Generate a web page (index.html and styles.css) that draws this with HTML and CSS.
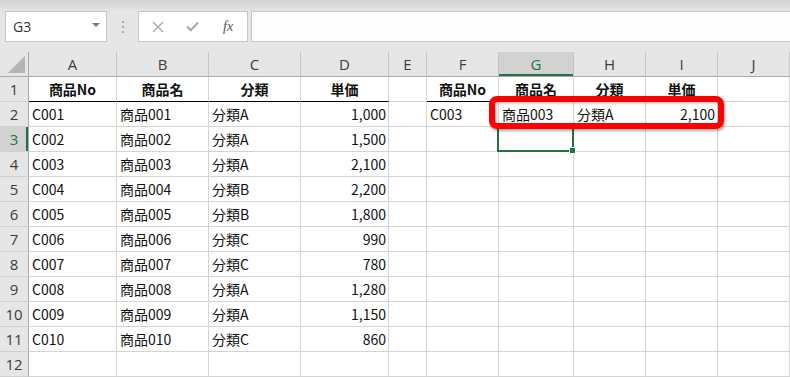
FILE: index.html
```html
<!DOCTYPE html>
<html lang="ja">

<head>
    <meta charset="UTF-8">
    <meta name="viewport" content="width=device-width, initial-scale=1.0">
    <title>Sheet</title>
    <link rel="stylesheet" href="styles.css">
</head>

<body>
    <div class="app">
        <div class="topbar"></div>

        <div class="formula-bar">
            <div class="name-box">
                <span>G3</span>
                <span class="caret"></span>
            </div>
            <div class="dots"><i></i><i></i><i></i></div>
            <div class="fx-box">
                <svg class="icon" width="12" height="12" viewBox="0 0 12 12">
                    <path d="M1 1 L11 11 M11 1 L1 11" stroke="#a9a9a9" stroke-width="1.4" fill="none" />
                </svg>
                <svg class="icon" width="13" height="11" viewBox="0 0 13 11">
                    <path d="M1 5.5 L4.8 9.3 L12 1.5" stroke="#a9a9a9" stroke-width="2" fill="none" />
                </svg>
                <span class="fx">fx</span>
            </div>
            <div class="formula-input"></div>
        </div>

        <div class="sheet">
            <div class="grid">
                <!-- column headers -->
                <div class="corner"><span class="tri"></span></div>
                <div class="ch">A</div>
                <div class="ch">B</div>
                <div class="ch">C</div>
                <div class="ch">D</div>
                <div class="ch">E</div>
                <div class="ch">F</div>
                <div class="ch sel">G</div>
                <div class="ch">H</div>
                <div class="ch">I</div>
                <div class="ch">J</div>

                <!-- row 1 -->
                <div class="rh">1</div>
                <div class="c hd line">商品No</div>
                <div class="c hd line">商品名</div>
                <div class="c hd line">分類</div>
                <div class="c hd line">単価</div>
                <div class="c"></div>
                <div class="c hd line">商品No</div>
                <div class="c hd line">商品名</div>
                <div class="c hd line">分類</div>
                <div class="c hd line">単価</div>
                <div class="c"></div>

                <!-- row 2 -->
                <div class="rh">2</div>
                <div class="c">C001</div>
                <div class="c">商品001</div>
                <div class="c">分類A</div>
                <div class="c num">1,000</div>
                <div class="c"></div>
                <div class="c">C003</div>
                <div class="c">商品003</div>
                <div class="c">分類A</div>
                <div class="c num">2,100</div>
                <div class="c"></div>

                <!-- row 3 -->
                <div class="rh sel">3</div>
                <div class="c">C002</div>
                <div class="c">商品002</div>
                <div class="c">分類A</div>
                <div class="c num">1,500</div>
                <div class="c"></div>
                <div class="c"></div>
                <div class="c"></div>
                <div class="c"></div>
                <div class="c"></div>
                <div class="c"></div>

                <!-- row 4 -->
                <div class="rh">4</div>
                <div class="c">C003</div>
                <div class="c">商品003</div>
                <div class="c">分類A</div>
                <div class="c num">2,100</div>
                <div class="c"></div>
                <div class="c"></div>
                <div class="c"></div>
                <div class="c"></div>
                <div class="c"></div>
                <div class="c"></div>

                <!-- row 5 -->
                <div class="rh">5</div>
                <div class="c">C004</div>
                <div class="c">商品004</div>
                <div class="c">分類B</div>
                <div class="c num">2,200</div>
                <div class="c"></div>
                <div class="c"></div>
                <div class="c"></div>
                <div class="c"></div>
                <div class="c"></div>
                <div class="c"></div>

                <!-- row 6 -->
                <div class="rh">6</div>
                <div class="c">C005</div>
                <div class="c">商品005</div>
                <div class="c">分類B</div>
                <div class="c num">1,800</div>
                <div class="c"></div>
                <div class="c"></div>
                <div class="c"></div>
                <div class="c"></div>
                <div class="c"></div>
                <div class="c"></div>

                <!-- row 7 -->
                <div class="rh">7</div>
                <div class="c">C006</div>
                <div class="c">商品006</div>
                <div class="c">分類C</div>
                <div class="c num">990</div>
                <div class="c"></div>
                <div class="c"></div>
                <div class="c"></div>
                <div class="c"></div>
                <div class="c"></div>
                <div class="c"></div>

                <!-- row 8 -->
                <div class="rh">8</div>
                <div class="c">C007</div>
                <div class="c">商品007</div>
                <div class="c">分類C</div>
                <div class="c num">780</div>
                <div class="c"></div>
                <div class="c"></div>
                <div class="c"></div>
                <div class="c"></div>
                <div class="c"></div>
                <div class="c"></div>

                <!-- row 9 -->
                <div class="rh">9</div>
                <div class="c">C008</div>
                <div class="c">商品008</div>
                <div class="c">分類A</div>
                <div class="c num">1,280</div>
                <div class="c"></div>
                <div class="c"></div>
                <div class="c"></div>
                <div class="c"></div>
                <div class="c"></div>
                <div class="c"></div>

                <!-- row 10 -->
                <div class="rh">10</div>
                <div class="c">C009</div>
                <div class="c">商品009</div>
                <div class="c">分類A</div>
                <div class="c num">1,150</div>
                <div class="c"></div>
                <div class="c"></div>
                <div class="c"></div>
                <div class="c"></div>
                <div class="c"></div>
                <div class="c"></div>

                <!-- row 11 -->
                <div class="rh">11</div>
                <div class="c">C010</div>
                <div class="c">商品010</div>
                <div class="c">分類C</div>
                <div class="c num">860</div>
                <div class="c"></div>
                <div class="c"></div>
                <div class="c"></div>
                <div class="c"></div>
                <div class="c"></div>
                <div class="c"></div>

                <!-- row 12 -->
                <div class="rh">12</div>
                <div class="c"></div>
                <div class="c"></div>
                <div class="c"></div>
                <div class="c"></div>
                <div class="c"></div>
                <div class="c"></div>
                <div class="c"></div>
                <div class="c"></div>
                <div class="c"></div>
                <div class="c"></div>
            </div>

            <div class="selection"><span class="handle"></span></div>
            <div class="callout"></div>
        </div>
    </div>
</body>

</html>
```

FILE: styles.css
```css
body {
    margin: 0;
    background-color: #e6e6e6;
    font-family: "Noto Sans CJK JP", "Noto Sans", sans-serif;
}

.app {
    width: 790px;
}

.topbar {
    height: 11px;
    background: linear-gradient(#d2d2d2, #e4e4e4);
}

/* formula bar */

.formula-bar {
    display: flex;
    height: 31px;
    padding-left: 5px;
}

.name-box {
    width: 102px;
    box-sizing: border-box;
    border: 1px solid #c6c6c6;
    background-color: #fff;
    display: flex;
    align-items: center;
    justify-content: space-between;
    padding: 0 6px 0 7px;
    font-family: "Open Sans", "Noto Sans", sans-serif;
    font-size: 14px;
    color: #333;
}

.caret {
    width: 0;
    height: 0;
    border-left: 4px solid transparent;
    border-right: 4px solid transparent;
    border-top: 4px solid #777;
    margin-bottom: 3px;
}

.dots {
    width: 31px;
    display: flex;
    flex-direction: column;
    align-items: center;
    justify-content: center;
    gap: 3px;
}

.dots i {
    width: 2px;
    height: 2px;
    background-color: #a8a8a8;
}

.fx-box {
    width: 110px;
    box-sizing: border-box;
    border: 1px solid #c6c6c6;
    background-color: #fff;
    display: flex;
    align-items: center;
    padding-left: 13px;
    gap: 22px;
}

.fx {
    font-family: "Liberation Serif", serif;
    font-style: italic;
    font-size: 14px;
    color: #555;
    margin-left: 2px;
}

.formula-input {
    flex: 1;
    margin-left: 3px;
    border: 1px solid #c6c6c6;
    border-right: none;
    background-color: #fdfdfd;
}

/* sheet */

.sheet {
    position: relative;
    margin-top: 10px;
}

.grid {
    display: grid;
    grid-template-columns: 29px 88px 92px 92px 88px 38px 72px 75px 72px 72px 1fr;
    grid-auto-rows: 25px;
    background-color: #fff;
}

.grid > div {
    box-sizing: border-box;
}

.corner {
    position: relative;
    background-color: #e6e6e6;
    border-right: 1px solid #ababab;
    border-bottom: 1px solid #ababab;
}

.tri {
    position: absolute;
    right: 3px;
    bottom: 3px;
    width: 0;
    height: 0;
    border-left: 17px solid transparent;
    border-bottom: 17px solid #b5b5b5;
}

.ch {
    background-color: #e6e6e6;
    border-right: 1px solid #c4c4c4;
    border-bottom: 1px solid #ababab;
    text-align: center;
    line-height: 25px;
    font-family: "Open Sans", "Noto Sans", sans-serif;
    font-size: 15px;
    color: #3c3c3c;
}

.ch.sel {
    background-color: #d2d2d2;
    color: #217346;
    box-shadow: inset 0 -2px 0 #217346;
}

.rh {
    background-color: #e6e6e6;
    border-right: 1px solid #ababab;
    border-bottom: 1px solid #d0d0d0;
    text-align: center;
    line-height: 24px;
    font-family: "Open Sans", "Noto Sans", sans-serif;
    font-size: 15px;
    color: #3c3c3c;
}

.rh.sel {
    background-color: #d2d2d2;
    color: #217346;
    box-shadow: inset -2px 0 0 #217346;
}

.c {
    border-right: 1px solid #d4d4d4;
    border-bottom: 1px solid #d4d4d4;
    padding: 0 3px;
    line-height: 24px;
    font-size: 14px;
    color: #111;
    white-space: nowrap;
    overflow: hidden;
}

.num {
    text-align: right;
    padding-right: 2px;
}

.hd {
    font-weight: bold;
    text-align: center;
}

.line {
    border-bottom-color: #000;
}

/* overlays */

.selection {
    position: absolute;
    left: 497px;
    top: 73px;
    width: 77px;
    height: 27px;
    box-sizing: border-box;
    border: 2px solid #217346;
}

.handle {
    position: absolute;
    right: -4px;
    bottom: -4px;
    width: 5px;
    height: 5px;
    background-color: #217346;
    border: 1px solid #fff;
}

.callout {
    position: absolute;
    left: 489px;
    top: 44px;
    width: 235px;
    height: 33px;
    box-sizing: border-box;
    border: 6px solid #ff0000;
    border-radius: 8px;
    box-shadow: 1px 2px 3px rgba(0, 0, 0, 0.35), inset 1px 1px 3px rgba(0, 0, 0, 0.3);
}
```
